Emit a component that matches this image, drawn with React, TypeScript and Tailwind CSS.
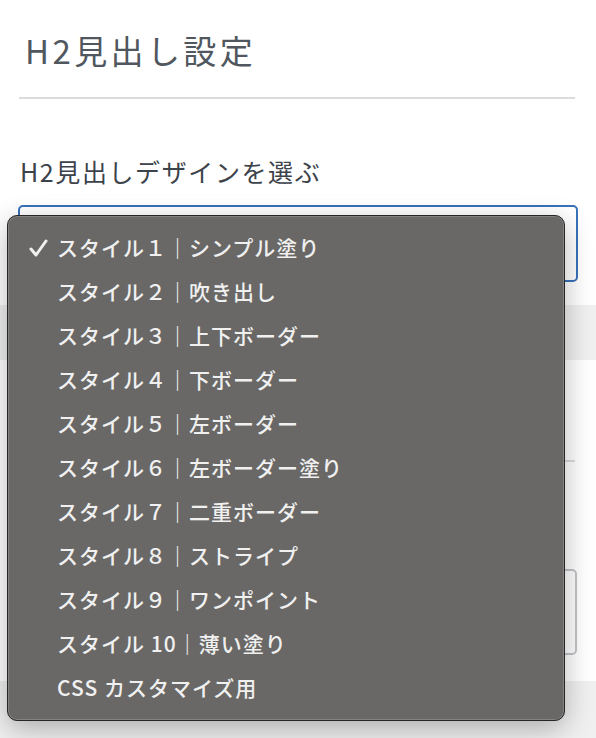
import React from 'react'

const options = [
  'スタイル１｜シンプル塗り',
  'スタイル２｜吹き出し',
  'スタイル３｜上下ボーダー',
  'スタイル４｜下ボーダー',
  'スタイル５｜左ボーダー',
  'スタイル６｜左ボーダー塗り',
  'スタイル７｜二重ボーダー',
  'スタイル８｜ストライプ',
  'スタイル９｜ワンポイント',
  'スタイル 10｜薄い塗り',
  'CSS カスタマイズ用',
]

const font = { fontFamily: '"Noto Sans CJK JP", "Noto Sans", sans-serif' }

export default function App() {
  const selected = 0

  return (
    <div className="relative w-[596px] h-[738px] overflow-hidden bg-white" style={font}>
      {/* Page content under the menu */}
      <div className="flex flex-col">
        <h2 className="pl-[25px] pt-[27px] text-[33px] leading-[46px] text-[#50575e] tracking-[3.4px]">
          H2見出し設定
        </h2>
        <hr className="mt-[24px] ml-[19px] mr-[21px] border-t-2 border-[#dcdcde]" />

        <label className="pl-[20px] mt-[56px] text-[25px] leading-[32px] text-[#3c434a] tracking-[1.6px]">
          H2見出しデザインを選ぶ
        </label>
        <div className="mt-[18px] ml-[18px] w-[560px] h-[77px] border-2 border-[#3872b9] rounded-[5px] bg-white" />

        <div className="mt-[23px] h-[55px] bg-[#f0f0f1]" />

        <hr className="mt-[100px] ml-[19px] mr-[21px] border-t-2 border-[#dcdcde]" />

        <div className="mt-[107px] ml-[18px] w-[559px] h-[86px] border-2 border-[#c3c4c7] rounded-[5px] bg-white" />

        <div className="mt-[26px] h-[80px] bg-[#f0f0f1]" />
      </div>

      {/* Open select menu */}
      <div className="absolute left-[7px] top-[215px] w-[558px] rounded-[10px] border border-[#262626] bg-[#696866] py-[10px] shadow-[0_8px_28px_rgba(0,0,0,0.28),inset_0_0_0_1px_rgba(255,255,255,0.18)]">
        <ul className="flex flex-col">
          {options.map((opt, i) => (
            <li key={opt} className="flex h-[44px] items-center text-[21px] font-medium tracking-[1px] text-[#f0f0f0]">
              <span className="flex w-[49px] justify-end pr-[9px]">
                {i === selected && (
                  <svg width="19" height="18" viewBox="0 0 19 18" fill="none">
                    <path
                      d="M2 10 L7 16 L17 2"
                      stroke="#f0f0f0"
                      strokeWidth="3"
                      strokeLinecap="round"
                      strokeLinejoin="round"
                    />
                  </svg>
                )}
              </span>
              <span>{opt}</span>
            </li>
          ))}
        </ul>
      </div>
    </div>
  )
}
